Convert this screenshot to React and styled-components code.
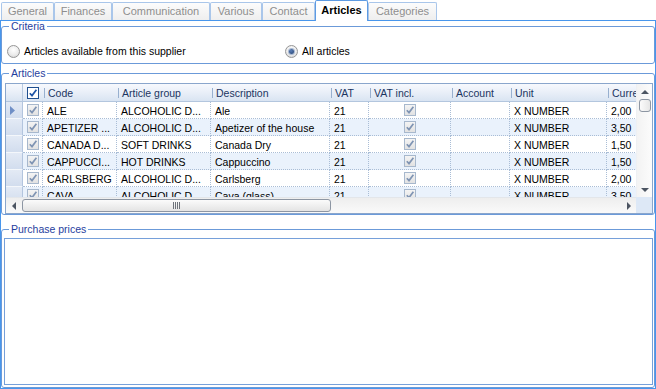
import React from 'react';
import styled, { createGlobalStyle } from 'styled-components';

const GlobalStyle = createGlobalStyle`
  html, body { margin: 0; padding: 0; background: #fff; }
  body { font-family: "Liberation Sans", Arial, sans-serif; font-size: 10.5px; color: #000; }
  * { box-sizing: border-box; }
`;

const COLS = '17px 20px 74px 94px 119px 39px 82px 59px 97px 60px';

const Window = styled.div`
  width: 656px;
  height: 389px;
  display: flex;
  flex-direction: column;
  background: #fff;
  overflow: hidden;
`;

const TabStrip = styled.div`
  height: 20px;
  display: flex;
  align-items: flex-end;
  padding-left: 1px;
  position: relative;
  z-index: 1;
`;

const Tab = styled.div`
  width: ${(p) => p.$w}px;
  height: ${(p) => (p.$active ? 21 : 18)}px;
  margin-bottom: ${(p) => (p.$active ? -1 : 0)}px;
  border: 1px solid ${(p) => (p.$active ? '#5d9be3' : '#a9c6ea')};
  border-bottom: none;
  border-radius: 2px 2px 0 0;
  background: ${(p) => (p.$active ? '#fff' : 'linear-gradient(#fcfcfc, #eeeeee)')};
  color: ${(p) => (p.$active ? '#000' : '#8e8e8e')};
  font-weight: ${(p) => (p.$active ? 'bold' : 'normal')};
  font-size: 11px;
  display: flex;
  align-items: center;
  justify-content: center;
  padding-bottom: ${(p) => (p.$active ? 3 : 2)}px;
  white-space: nowrap;
`;

const TabPage = styled.div`
  flex: 1;
  min-height: 0;
  border: 1px solid #4896ec;
  display: flex;
  flex-direction: column;
`;

const GroupBox = styled.fieldset`
  margin: ${(p) => p.$gap || 0}px 0 0 0;
  padding: 0;
  min-width: 0;
  border: 1px solid #6b9ad9;
  border-radius: 3px;
  height: ${(p) => (p.$h ? `${p.$h}px` : 'auto')};
  flex: ${(p) => (p.$grow ? '1' : 'none')};
  min-height: 0;
  display: flex;
  flex-direction: column;
`;

const Legend = styled.legend`
  margin-left: 7px;
  padding: 0 2px;
  line-height: 11px;
  font-size: 10.5px;
  color: #1f3e9e;
`;

const CriteriaBody = styled.div`
  padding: 13px 0 0 5px;
  display: grid;
  grid-template-columns: 278px auto;
`;

const RadioLabel = styled.label`
  display: flex;
  align-items: center;
  gap: 4px;
  height: 13px;
  line-height: 13px;
  white-space: nowrap;
`;

const RadioCircle = styled.span`
  width: 13px;
  height: 13px;
  flex: none;
  border-radius: 50%;
  border: 1px solid #969696;
  background: radial-gradient(circle at 50% 35%, #ffffff 0%, #ececec 55%, #cfcfcf 100%);
  display: inline-flex;
  align-items: center;
  justify-content: center;
  &::after {
    content: '';
    display: ${(p) => (p.$checked ? 'block' : 'none')};
    width: 5px;
    height: 5px;
    border-radius: 50%;
    background: radial-gradient(circle at 40% 35%, #5b7fb8, #22406f);
    box-shadow: 0 0 0 1px #a9b9d2;
  }
`;

const ArticlesBody = styled.div`
  padding: 4px 1px 0 3px;
`;

const Grid = styled.div`
  height: 131px;
  border: 1px solid #8aa6cc;
  display: grid;
  grid-template-columns: 1fr 16px;
  grid-template-rows: 1fr 16px;
  overflow: hidden;
  background: #fff;
`;

const Viewport = styled.div`
  overflow: hidden;
  min-width: 0;
  min-height: 0;
`;

const HeaderRow = styled.div`
  display: grid;
  grid-template-columns: ${COLS};
  height: 18px;
  width: max-content;
  background: linear-gradient(#f7f9fd, #e9eff8 50%, #d9e4f2);
  border-bottom: 1px solid #b3c6de;
`;

const HeaderCell = styled.div`
  position: relative;
  padding-left: ${(p) => (p.$center ? 0 : 5)}px;
  padding-top: 1px;
  display: flex;
  align-items: center;
  justify-content: ${(p) => (p.$center ? 'center' : 'flex-start')};
  color: #1b3561;
  white-space: nowrap;
  overflow: hidden;
  ${(p) =>
    p.$sep &&
    `&::before {
      content: '';
      position: absolute;
      left: 1px;
      top: 4px;
      bottom: 3px;
      width: 1px;
      background: #98b0cf;
    }`}
`;

const RowHeaderCorner = styled.div`
  border-right: 1px solid #b9cae0;
`;

const DataRow = styled.div`
  display: grid;
  grid-template-columns: ${COLS};
  height: 17px;
  width: max-content;
  background: ${(p) => (p.$alt ? '#eaf2fc' : '#fff')};
`;

const RowHeader = styled.div`
  background: linear-gradient(#e3eaf5, #d2ddee);
  border-right: 1px solid #b3c5de;
  border-bottom: 1px solid #f4f7fb;
  display: flex;
  align-items: center;
  padding-left: 4px;
`;

const Cell = styled.div`
  border-right: 1px dotted #a9bdd6;
  border-bottom: 1px dotted #a9bdd6;
  padding-left: ${(p) => (p.$center ? 0 : 4)}px;
  padding-top: ${(p) => (p.$center ? 0 : 1)}px;
  display: flex;
  align-items: center;
  justify-content: ${(p) => (p.$center ? 'center' : 'flex-start')};
  white-space: nowrap;
  overflow: hidden;
`;

const CheckBox = styled.span`
  width: 12px;
  height: 12px;
  flex: none;
  display: inline-flex;
  align-items: center;
  justify-content: center;
  border: 1px solid ${(p) => (p.$enabled ? '#1f4f8f' : '#a7b8cd')};
  background: ${(p) => (p.$enabled ? '#fff' : 'linear-gradient(#f4f4f4, #e2e2e2)')};
  color: ${(p) => (p.$enabled ? '#1e54a6' : '#7f94b3')};
`;

const VScroll = styled.div`
  display: flex;
  flex-direction: column;
  background: linear-gradient(to right, #f3f3f3, #fcfcfc);
  border-left: 1px solid #eef0f3;
`;

const HScroll = styled.div`
  display: flex;
  align-items: center;
  background: linear-gradient(#eeeeee, #fafafa);
  border-top: 1px solid #e3e6ea;
`;

const Corner = styled.div`
  background: #dde8f6;
`;

const ArrowButton = styled.div`
  flex: none;
  width: 15px;
  height: 15px;
  display: flex;
  align-items: center;
  justify-content: center;
  color: #4c5562;
`;

const VThumb = styled.div`
  flex: none;
  height: 13px;
  margin: 0 1px 0 2px;
  border: 1px solid #8d96a3;
  border-radius: 3px;
  background: linear-gradient(to right, #fbfbfb, #e6e6e6);
`;

const HThumb = styled.div`
  flex: none;
  width: 309px;
  height: 13px;
  margin-left: 1px;
  border: 1px solid #8d96a3;
  border-radius: 3px;
  background: linear-gradient(#fbfbfb, #e4e4e4);
  display: flex;
  align-items: center;
  justify-content: center;
  gap: 1px;
`;

const Grip = styled.span`
  width: 1px;
  height: 7px;
  background: #6e737a;
`;

const Spacer = styled.div`
  flex: 1;
`;

const PurchaseBody = styled.div`
  flex: 1;
  min-height: 0;
  display: flex;
  padding: 3px 1px 2px 2px;
`;

const InnerPanel = styled.div`
  flex: 1;
  border: 1px solid #76a0da;
  background: #fff;
`;

const Check = () => (
  <svg width="10" height="10" viewBox="0 0 10 10">
    <path d="M1.8 5.2 L4 7.6 L8.4 1.8" fill="none" stroke="currentColor" strokeWidth="1.7" />
  </svg>
);

const Tri = ({ dir }) => {
  const pts = {
    up: '0,5 4,1 8,5',
    down: '0,1 8,1 4,5',
    left: '5,0 5,8 1,4',
    right: '1,0 1,8 5,4',
  }[dir];
  const vertical = dir === 'up' || dir === 'down';
  return (
    <svg width={vertical ? 8 : 6} height={vertical ? 6 : 8} viewBox={vertical ? '0 0 8 6' : '0 0 6 8'}>
      <polygon points={pts} fill="currentColor" />
    </svg>
  );
};

const tabs = [
  { label: 'General', w: 53 },
  { label: 'Finances', w: 58 },
  { label: 'Communication', w: 98 },
  { label: 'Various', w: 52 },
  { label: 'Contact', w: 53 },
  { label: 'Articles', w: 53, active: true },
  { label: 'Categories', w: 69 },
];

const columns = [
  { key: 'code', title: 'Code' },
  { key: 'group', title: 'Article group' },
  { key: 'desc', title: 'Description' },
  { key: 'vat', title: 'VAT' },
  { key: 'incl', title: 'VAT incl.', check: true },
  { key: 'account', title: 'Account' },
  { key: 'unit', title: 'Unit' },
  { key: 'curr', title: 'Currency' },
];

const rows = [
  { code: 'ALE', group: 'ALCOHOLIC D...', desc: 'Ale', vat: '21', incl: true, account: '', unit: 'X NUMBER', curr: '2,00' },
  { code: 'APETIZER ...', group: 'ALCOHOLIC D...', desc: 'Apetizer of the house', vat: '21', incl: true, account: '', unit: 'X NUMBER', curr: '3,50' },
  { code: 'CANADA D...', group: 'SOFT DRINKS', desc: 'Canada Dry', vat: '21', incl: true, account: '', unit: 'X NUMBER', curr: '1,50' },
  { code: 'CAPPUCCI...', group: 'HOT DRINKS', desc: 'Cappuccino', vat: '21', incl: true, account: '', unit: 'X NUMBER', curr: '1,50' },
  { code: 'CARLSBERG', group: 'ALCOHOLIC D...', desc: 'Carlsberg', vat: '21', incl: true, account: '', unit: 'X NUMBER', curr: '2,00' },
  { code: 'CAVA', group: 'ALCOHOLIC D...', desc: 'Cava (glass)', vat: '21', incl: true, account: '', unit: 'X NUMBER', curr: '3,50' },
];

export default function App() {
  return (
    <>
      <GlobalStyle />
      <Window>
        <TabStrip>
          {tabs.map((t) => (
            <Tab key={t.label} $w={t.w} $active={t.active}>
              {t.label}
            </Tab>
          ))}
        </TabStrip>
        <TabPage>
          <GroupBox $h={43}>
            <Legend>Criteria</Legend>
            <CriteriaBody>
              <RadioLabel>
                <RadioCircle />
                Articles available from this supplier
              </RadioLabel>
              <RadioLabel>
                <RadioCircle $checked />
                All articles
              </RadioLabel>
            </CriteriaBody>
          </GroupBox>

          <GroupBox $h={147} $gap={4}>
            <Legend>Articles</Legend>
            <ArticlesBody>
              <Grid>
                <Viewport>
                  <HeaderRow>
                    <RowHeaderCorner />
                    <HeaderCell $center>
                      <CheckBox $enabled>
                        <Check />
                      </CheckBox>
                    </HeaderCell>
                    {columns.map((c) => (
                      <HeaderCell key={c.key} $sep>
                        {c.title}
                      </HeaderCell>
                    ))}
                  </HeaderRow>
                  {rows.map((r, i) => (
                    <DataRow key={r.code} $alt={i % 2 === 1}>
                      <RowHeader>
                        {i === 0 && (
                          <svg width="5" height="9" viewBox="0 0 5 9">
                            <polygon points="0,0 5,4.5 0,9" fill="#6f8fc6" />
                          </svg>
                        )}
                      </RowHeader>
                      <Cell $center>
                        <CheckBox>
                          <Check />
                        </CheckBox>
                      </Cell>
                      {columns.map((c) =>
                        c.check ? (
                          <Cell key={c.key} $center>
                            <CheckBox>
                              <Check />
                            </CheckBox>
                          </Cell>
                        ) : (
                          <Cell key={c.key}>{r[c.key]}</Cell>
                        )
                      )}
                    </DataRow>
                  ))}
                </Viewport>
                <VScroll>
                  <ArrowButton>
                    <Tri dir="up" />
                  </ArrowButton>
                  <VThumb />
                  <Spacer />
                  <ArrowButton>
                    <Tri dir="down" />
                  </ArrowButton>
                </VScroll>
                <HScroll>
                  <ArrowButton>
                    <Tri dir="left" />
                  </ArrowButton>
                  <HThumb>
                    <Grip />
                    <Grip />
                    <Grip />
                    <Grip />
                  </HThumb>
                  <Spacer />
                  <ArrowButton>
                    <Tri dir="right" />
                  </ArrowButton>
                </HScroll>
                <Corner />
              </Grid>
            </ArticlesBody>
          </GroupBox>

          <GroupBox $grow $gap={9}>
            <Legend>Purchase prices</Legend>
            <PurchaseBody>
              <InnerPanel />
            </PurchaseBody>
          </GroupBox>
        </TabPage>
      </Window>
    </>
  );
}
